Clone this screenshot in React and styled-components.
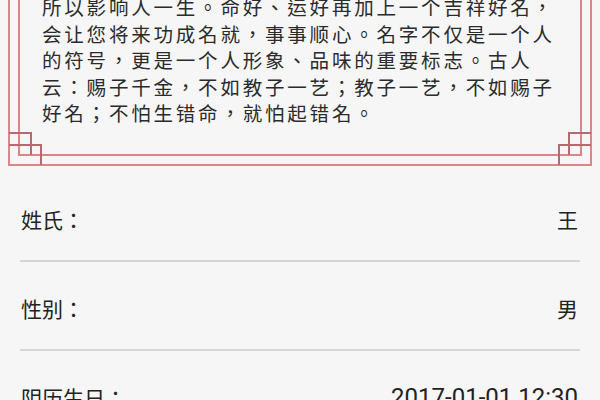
import React from 'react';
import styled, { createGlobalStyle } from 'styled-components';

const GlobalStyle = createGlobalStyle`
    html, body {
        margin: 0;
        padding: 0;
        background: #f6f6f6;
        font-family: Roboto, "Noto Sans CJK TC", sans-serif;
        overflow: hidden;
    }
`;

const frameColor = '#d9858a';

const Page = styled.div`
    width: 600px;
    height: 400px;
    overflow: hidden;
    background: #f6f6f6;
`;

const FrameOuter = styled.div`
    position: relative;
    margin: 0 8px 0 8px;
    padding: 0 8px 8px;
    border: 2px solid ${frameColor};
    border-top: none;
`;

const FrameInner = styled.div`
    border: 2px solid ${frameColor};
    border-top: none;
    padding: 0 10px 27px 22px;
`;

const Intro = styled.p`
    margin: -6px 0 0;
    font-family: "Noto Sans CJK TC", sans-serif;
    font-size: 19.5px;
    letter-spacing: 2.8px;
    line-height: 26.6px;
    color: #2b2b2b;
    white-space: nowrap;
`;

const Corner = styled.svg`
    position: absolute;
    bottom: -2px;
    ${(p) => (p.$side === 'left' ? 'left: -2px;' : 'right: -2px; transform: scaleX(-1);')}
    width: 34px;
    height: 34px;
    overflow: visible;
`;

const Form = styled.div`
    margin-top: 7px;
    padding: 0 20px 0 20px;
`;

const Row = styled.div`
    display: flex;
    align-items: center;
    justify-content: space-between;
    height: 30px;
    padding: 31px 2px 26px 1px;
    border-bottom: 2px solid #d6d6d6;
`;

const Label = styled.span`
    font-family: "Noto Sans CJK TC", sans-serif;
    font-size: 21px;
    color: #222;
`;

const Value = styled.span`
    font-family: Roboto, "Noto Sans CJK TC", sans-serif;
    font-size: ${(p) => (p.$mono ? '24px' : '21px')};
    color: #222;
`;

function CornerMark({ side }) {
    // interlocked squares at the frame corner, drawn from the outer corner
    return (
        <Corner $side={side} viewBox="0 0 34 34">
            <g fill="none" stroke="#b56a70" strokeWidth="2">
                <path d="M1 1 H23 V23" />
                <path d="M1 13 H33 V33" />
            </g>
        </Corner>
    );
}

const lines = [
    '所以影响人一生。命好、运好再加上一个吉祥好名，',
    '会让您将来功成名就，事事顺心。名字不仅是一个人',
    '的符号，更是一个人形象、品味的重要标志。古人',
    '云：赐子千金，不如教子一艺；教子一艺，不如赐子',
    '好名；不怕生错命，就怕起错名。',
];

const fields = [
    { label: '姓氏：', value: '王' },
    { label: '性别：', value: '男' },
    { label: '阴历生日：', value: '2017-01-01 12:30', mono: true },
];

export default function App() {
    return (
        <Page>
            <GlobalStyle />
            <FrameOuter>
                <FrameInner>
                    <Intro>
                        {lines.map((line, i) => (
                            <React.Fragment key={i}>
                                {line}
                                {i < lines.length - 1 && <br />}
                            </React.Fragment>
                        ))}
                    </Intro>
                </FrameInner>
                <CornerMark side="left" />
                <CornerMark side="right" />
            </FrameOuter>
            <Form>
                {fields.map((f) => (
                    <Row key={f.label}>
                        <Label>{f.label}</Label>
                        <Value $mono={f.mono}>{f.value}</Value>
                    </Row>
                ))}
            </Form>
        </Page>
    );
}
